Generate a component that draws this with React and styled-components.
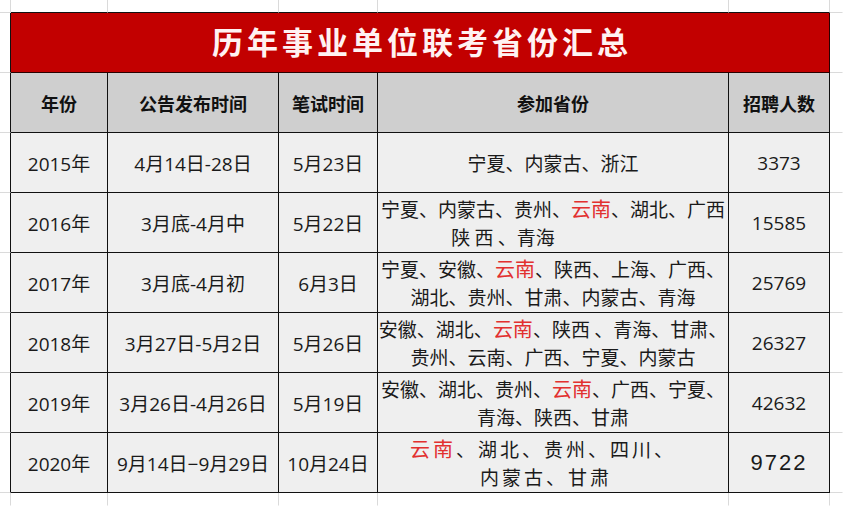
import React from "react";
import styled, { createGlobalStyle } from "styled-components";

const GlobalStyle = createGlobalStyle`
  html, body { margin: 0; padding: 0; background: #ffffff; }
  body { font-family: "Open Sans", "Noto Sans CJK SC", sans-serif; }
`;

const FAINT = "#dadada";
const INK = "#111111";

const Sheet = styled.div`
  display: grid;
  width: 843px;
  height: 506px;
  grid-template-columns: 11px 97px 171px 99px 351px 101px 13px;
  grid-template-rows: 13px repeat(8, 60px) 13px;
  overflow: hidden;
`;

const Gap = styled.div`
  box-sizing: border-box;
  background: #ffffff;
  border-right: 1px solid ${(p) => p.$r || FAINT};
  border-bottom: 1px solid ${(p) => p.$b || FAINT};
`;

const Title = styled.div`
  grid-column: span 5;
  box-sizing: border-box;
  background: #c20000;
  border-right: 1px solid #2a0000;
  border-bottom: 1px solid #2a0000;
  display: flex;
  align-items: center;
  justify-content: center;
  padding-bottom: 4px;
  color: #fff2f2;
  font-family: "Noto Sans CJK SC", sans-serif;
  font-weight: 700;
  font-size: 31px;
  letter-spacing: 4px;
  text-indent: 4px;
`;

const Head = styled.div`
  box-sizing: border-box;
  background: #cfcfcf;
  border-right: 1px solid ${INK};
  border-bottom: 1px solid ${INK};
  display: flex;
  align-items: center;
  justify-content: center;
  color: #111;
  font-family: "Noto Sans CJK SC", sans-serif;
  font-weight: 700;
  font-size: 18px;
`;

const Data = styled.div`
  box-sizing: border-box;
  background: #efefef;
  border-right: 1px solid ${INK};
  border-bottom: 1px solid ${INK};
  display: flex;
  flex-direction: column;
  align-items: center;
  justify-content: center;
  color: #1a1a1a;
  font-size: ${(p) => (p.$big ? "22px" : "19px")};
  font-family: ${(p) =>
    p.$big
      ? '"Liberation Sans", "Noto Sans CJK SC", sans-serif'
      : '"Open Sans", "Noto Sans CJK SC", sans-serif'};
  letter-spacing: ${(p) => (p.$big ? "2px" : "0")};
  white-space: nowrap;
`;

const Line = styled.div`
  line-height: 28px;
  white-space: pre;
  letter-spacing: ${(p) => (p.$wide ? "3px" : "0")};
  padding-right: ${(p) => p.$shift || 0}px;
  font-family: "Noto Sans CJK SC", sans-serif;
`;

const Red = styled.span`
  color: #e2302f;
  font-size: 20px;
`;

const rows = [
  {
    year: "2015年",
    notice: "4月14日-28日",
    exam: "5月23日",
    lines: [{ t: "宁夏、内蒙古、浙江" }],
    count: "3373",
  },
  {
    year: "2016年",
    notice: "3月底-4月中",
    exam: "5月22日",
    lines: [
      { t: "宁夏、内蒙古、贵州、*云南*、湖北、广西" },
      { t: "陕 西 、青海", shift: 100 },
    ],
    count: "15585",
  },
  {
    year: "2017年",
    notice: "3月底-4月初",
    exam: "6月3日",
    lines: [
      { t: "宁夏、安徽、*云南*、陕西、上海、广西、" },
      { t: "湖北、贵州、甘肃、内蒙古、青海" },
    ],
    count: "25769",
  },
  {
    year: "2018年",
    notice: "3月27日-5月2日",
    exam: "5月26日",
    lines: [
      { t: "安徽、湖北、*云南*、陕西 、青海、甘肃、" },
      { t: "贵州、云南、广西、宁夏、内蒙古" },
    ],
    count: "26327",
  },
  {
    year: "2019年",
    notice: "3月26日-4月26日",
    exam: "5月19日",
    lines: [
      { t: "安徽、湖北、贵州、*云南*、广西、宁夏、" },
      { t: "青海、陕西、甘肃" },
    ],
    count: "42632",
  },
  {
    year: "2020年",
    notice: "9月14日−9月29日",
    exam: "10月24日",
    lines: [
      { t: "*云南*、湖北、贵州、四川、", wide: true, shift: 20 },
      { t: "内蒙古、甘肃", wide: true, shift: 14 },
    ],
    count: "9722",
    big: true,
  },
];

function Rich({ text }) {
  return text
    .split("*")
    .map((seg, i) => (i % 2 === 1 ? <Red key={i}>{seg}</Red> : <React.Fragment key={i}>{seg}</React.Fragment>));
}

const headers = ["年份", "公告发布时间", "笔试时间", "参加省份", "招聘人数"];

export default function App() {
  return (
    <>
      <GlobalStyle />
      <Sheet>
        {/* top margin row */}
        <Gap />
        {[0, 1, 2, 3, 4].map((i) => (
          <Gap key={"t" + i} $b={INK} />
        ))}
        <Gap $r="transparent" />

        {/* title row */}
        <Gap $r={INK} />
        <Title>历年事业单位联考省份汇总</Title>
        <Gap $r="transparent" />

        {/* header row */}
        <Gap $r={INK} />
        {headers.map((h) => (
          <Head key={h}>{h}</Head>
        ))}
        <Gap $r="transparent" />

        {rows.map((r) => (
          <React.Fragment key={r.year}>
            <Gap $r={INK} />
            <Data>{r.year}</Data>
            <Data>{r.notice}</Data>
            <Data>{r.exam}</Data>
            <Data>
              {r.lines.map((l, i) => (
                <Line key={i} $wide={l.wide} $shift={l.shift}>
                  <Rich text={l.t} />
                </Line>
              ))}
            </Data>
            <Data $big={r.big}>{r.count}</Data>
            <Gap $r="transparent" />
          </React.Fragment>
        ))}

        {/* bottom margin row */}
        {[0, 1, 2, 3, 4, 5].map((i) => (
          <Gap key={"b" + i} $b="transparent" />
        ))}
        <Gap $r="transparent" $b="transparent" />
      </Sheet>
    </>
  );
}
